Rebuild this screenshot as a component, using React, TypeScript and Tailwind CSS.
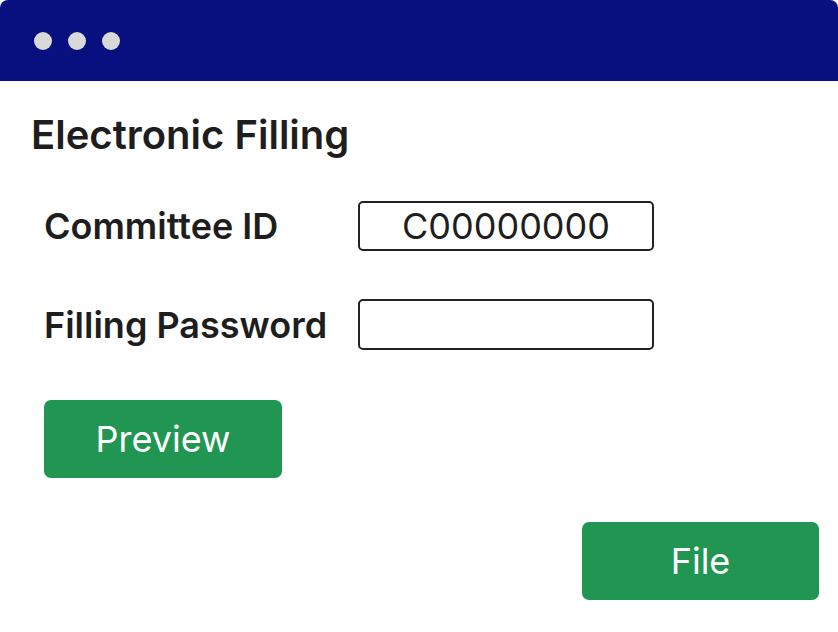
export default function App() {
  return (
    <div className="w-[838px] h-[632px] bg-white" style={{ fontFamily: 'Inter, "Noto Sans", sans-serif' }}>
      <div className="w-full h-full rounded-lg overflow-hidden bg-white flex flex-col">
        <div className="h-[81px] shrink-0 bg-[#08107f] flex items-center gap-4 pl-[34px]">
          <span className="w-[18px] h-[18px] rounded-full bg-[#d9d9d9]"></span>
          <span className="w-[18px] h-[18px] rounded-full bg-[#d9d9d9]"></span>
          <span className="w-[18px] h-[18px] rounded-full bg-[#d9d9d9]"></span>
        </div>
        <div className="flex-1 flex flex-col text-[#1e1e1e]">
          <h1 className="mt-[30px] ml-[31px] text-[40px] leading-[48px] font-semibold">Electronic Filling</h1>
          <div className="flex items-center ml-[44px] mt-[42px]">
            <label className="w-[314px] text-[36px] leading-[44px] font-semibold">Committee ID</label>
            <div className="w-[296px] h-[50px] border-2 border-[#222] rounded-[5px] flex items-center justify-center text-[36px]">
              C00000000
            </div>
          </div>
          <div className="flex items-center ml-[44px] mt-[48px]">
            <label className="w-[314px] text-[36px] leading-[44px] font-semibold">Filling Password</label>
            <div className="w-[296px] h-[51px] border-2 border-[#222] rounded-[5px]"></div>
          </div>
          <button className="ml-[44px] mt-[50px] w-[238px] h-[78px] rounded-[7px] bg-[#219653] text-white text-[36px]">
            Preview
          </button>
          <div className="flex justify-end pr-[19px] mt-[44px]">
            <button className="w-[237px] h-[78px] rounded-[7px] bg-[#219653] text-white text-[36px]">
              File
            </button>
          </div>
        </div>
      </div>
    </div>
  )
}
